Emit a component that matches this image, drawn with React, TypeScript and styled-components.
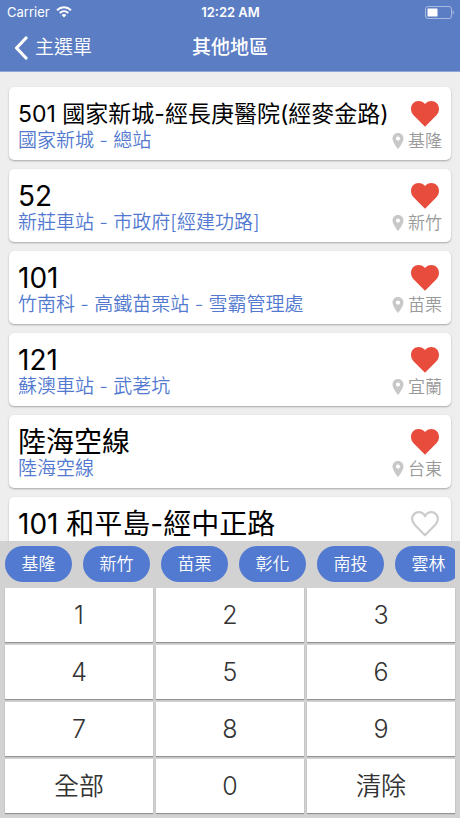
import React, { useState } from 'react';
import styled, { createGlobalStyle } from 'styled-components';

const GlobalStyle = createGlobalStyle`
  * { box-sizing: border-box; }
  body { margin: 0; }
  body, button {
    font-family: Inter, 'Noto Sans CJK TC', sans-serif;
  }
  button {
    margin: 0;
    padding: 0;
    border: 0;
    background: none;
    cursor: pointer;
  }
`;

const Screen = styled.div`
  display: flex;
  flex-direction: column;
  height: 100vh;
  background: #eeeeee;
  overflow: hidden;
`;

const TopBar = styled.header`
  flex: none;
  background: #5b7dc4;
  border-bottom: 1px solid #8ea5d6;
  color: #ffffff;
`;

const StatusBar = styled.div`
  display: grid;
  grid-template-columns: 1fr auto 1fr;
  align-items: center;
  height: 24px;
  padding: 0 6px 0 7px;
  font-size: 13px;
`;

const Carrier = styled.div`
  display: flex;
  align-items: center;
  gap: 6px;
`;

const Clock = styled.div`
  font-weight: 600;
`;

const Battery = styled.div`
  display: flex;
  justify-content: flex-end;
`;

const NavBar = styled.nav`
  display: grid;
  grid-template-columns: 1fr auto 1fr;
  align-items: center;
  height: 47px;
  padding: 0 14px;
`;

const BackButton = styled.button`
  display: flex;
  align-items: center;
  justify-self: start;
  gap: 7px;
  color: #ffffff;
  font-size: 19px;
  font-weight: 350;
  line-height: 24px;
`;

const NavTitle = styled.h1`
  margin: 0;
  font-size: 19px;
  font-weight: 500;
  line-height: 24px;
`;

const RouteList = styled.ul`
  display: flex;
  flex: 1;
  flex-direction: column;
  gap: 9px;
  min-height: 0;
  margin: 0;
  padding: 15px 9px 0;
  list-style: none;
  overflow: hidden;
`;

const RouteCard = styled.li`
  display: flex;
  flex: none;
  justify-content: space-between;
  height: 73px;
  padding: 10px 9px 0 9px;
  border-radius: 5px;
  background: #ffffff;
  box-shadow: 0 1px 2px rgba(0, 0, 0, 0.3);
`;

const RouteText = styled.div`
  min-width: 0;
  white-space: nowrap;
`;

const RouteName = styled.div<{ $long?: boolean }>`
  color: #000000;
  font-size: ${(p) => (p.$long ? 23 : 28)}px;
  font-weight: 400;
  line-height: 34px;
`;

const RouteEnds = styled.div`
  color: #5279cf;
  font-size: 19px;
  font-weight: 350;
  line-height: 20px;
`;

const RouteSide = styled.div`
  display: flex;
  flex: none;
  flex-direction: column;
  align-items: flex-end;
`;

const FavoriteButton = styled.button`
  display: flex;
  align-items: center;
  height: 34px;
  margin-right: 3px;
`;

const Region = styled.div`
  display: flex;
  align-items: center;
  gap: 4px;
  color: #999999;
  font-size: 17px;
  font-weight: 350;
  line-height: 20px;
`;

const Keyboard = styled.section`
  flex: none;
  padding: 5px;
  background: #d2d2d2;
`;

const ChipRow = styled.div`
  display: flex;
  gap: 11px;
  padding-bottom: 6px;
  overflow: hidden;
`;

const Chip = styled.button`
  flex: none;
  width: 67px;
  height: 36px;
  border-radius: 18px;
  background: #527ad0;
  color: #ffffff;
  font-size: 17px;
  font-weight: 350;
  line-height: 36px;
`;

const KeyGrid = styled.div`
  display: grid;
  grid-template-columns: repeat(3, 1fr);
  gap: 3px;
`;

const Key = styled.button`
  height: 54px;
  background: #ffffff;
  box-shadow: 0 1px 1px rgba(0, 0, 0, 0.3);
  color: #333333;
  font-size: 25px;
  font-weight: 350;
  line-height: 54px;
`;

const Heart = ({ filled }: { filled: boolean }) => (
  <svg width="28" height="26" viewBox="2 3 20 18.400" aria-hidden="true">
    {filled ? (
      <path
        d="M12 21.350 L4 13.300 C2.700 12 2 10.300 2 8.500 2 5.420 4.420 3 7.500 3c1.740 0 3.410.81 4.500 2.090C13.090 3.810 14.760 3 16.500 3 19.580 3 22 5.420 22 8.500c0 1.800-.7 3.500-2 4.800L12 21.350z"
        fill="#e74c3c"
      />
    ) : (
      <path
        d="M12 20.200 L4.600 12.700 C3.400 11.500 2.800 10.100 2.800 8.500 C2.800 5.800 4.900 3.800 7.500 3.800 C9.400 3.800 11.100 4.900 12 6.600 C12.900 4.900 14.600 3.800 16.500 3.800 C19.100 3.800 21.200 5.800 21.200 8.500 C21.200 10.100 20.600 11.500 19.400 12.700 Z"
        fill="none"
        stroke="#cccccc"
        strokeWidth="1.600"
        strokeLinejoin="round"
      />
    )}
  </svg>
);

const Pin = () => (
  <svg width="12" height="16" viewBox="0 0 12 16" aria-hidden="true">
    <path
      fill="#c8c8c8"
      fillRule="evenodd"
      d="M6 0 C2.600 0 .5 2.500 .5 5.500 C.5 9.500 6 16 6 16 C6 16 11.500 9.500 11.500 5.500 C11.500 2.500 9.400 0 6 0 Z M6 3.500 A2.100 2.100 0 1 1 6 7.700 A2.100 2.100 0 1 1 6 3.500 Z"
    />
  </svg>
);

const Wifi = () => (
  <svg width="16" height="12" viewBox="0 0 16 12" aria-hidden="true">
    <g fill="none" stroke="#ffffff" strokeWidth="2">
      <path d="M1 4.200 C5 .4 11 .4 15 4.200" />
      <path d="M3.700 7 C6.200 4.700 9.800 4.700 12.300 7" />
    </g>
    <path d="M8 11.500 L5.600 9 C7 7.800 9 7.800 10.400 9 Z" fill="#ffffff" />
  </svg>
);

const BatteryIcon = () => (
  <svg width="29" height="13" viewBox="0 0 29 13" aria-hidden="true">
    <rect x=".5" y=".5" width="26" height="12" rx="2.500" fill="none" stroke="#a9bbe0" />
    <rect x="2.500" y="2.500" width="10" height="8" rx=".5" fill="#ffffff" />
    <path d="M27.700 4.500 C29.200 5 29.200 8 27.700 8.500 Z" fill="#a9bbe0" />
  </svg>
);

const Chevron = () => (
  <svg width="14" height="24" viewBox="0 0 14 24" aria-hidden="true">
    <path
      d="M12 2 L2.500 12 L12 22"
      fill="none"
      stroke="#ffffff"
      strokeWidth="3.200"
      strokeLinecap="round"
      strokeLinejoin="round"
    />
  </svg>
);

interface Route {
  name: string;
  ends: string;
  region: string;
  favorite: boolean;
}

const ROUTES: Route[] = [
  { name: '501 國家新城-經長庚醫院(經麥金路)', ends: '國家新城 - 總站', region: '基隆', favorite: true },
  { name: '52', ends: '新莊車站 - 市政府[經建功路]', region: '新竹', favorite: true },
  { name: '101', ends: '竹南科 - 高鐵苗栗站 - 雪霸管理處', region: '苗栗', favorite: true },
  { name: '121', ends: '蘇澳車站 - 武荖坑', region: '宜蘭', favorite: true },
  { name: '陸海空線', ends: '陸海空線', region: '台東', favorite: true },
  { name: '101 和平島-經中正路', ends: '', region: '', favorite: false },
];

const REGIONS = ['基隆', '新竹', '苗栗', '彰化', '南投', '雲林'];
const KEYS = ['1', '2', '3', '4', '5', '6', '7', '8', '9', '全部', '0', '清除'];

const RouteItem = ({ route }: { route: Route }) => {
  const [favorite, setFavorite] = useState(route.favorite);
  return (
    <RouteCard>
      <RouteText>
        <RouteName $long={route.name.length > 16}>{route.name}</RouteName>
        <RouteEnds>{route.ends}</RouteEnds>
      </RouteText>
      <RouteSide>
        <FavoriteButton aria-label="收藏" aria-pressed={favorite} onClick={() => setFavorite(!favorite)}>
          <Heart filled={favorite} />
        </FavoriteButton>
        {route.region && (
          <Region>
            <Pin />
            {route.region}
          </Region>
        )}
      </RouteSide>
    </RouteCard>
  );
};

export default function App() {
  return (
    <Screen>
      <GlobalStyle />
      <TopBar>
        <StatusBar>
          <Carrier>
            Carrier
            <Wifi />
          </Carrier>
          <Clock>12:22 AM</Clock>
          <Battery>
            <BatteryIcon />
          </Battery>
        </StatusBar>
        <NavBar>
          <BackButton>
            <Chevron />
            主選單
          </BackButton>
          <NavTitle>其他地區</NavTitle>
        </NavBar>
      </TopBar>
      <RouteList>
        {ROUTES.map((route) => (
          <RouteItem key={route.name} route={route} />
        ))}
      </RouteList>
      <Keyboard>
        <ChipRow>
          {REGIONS.map((region) => (
            <Chip key={region}>{region}</Chip>
          ))}
        </ChipRow>
        <KeyGrid>
          {KEYS.map((label) => (
            <Key key={label}>{label}</Key>
          ))}
        </KeyGrid>
      </Keyboard>
    </Screen>
  );
}
